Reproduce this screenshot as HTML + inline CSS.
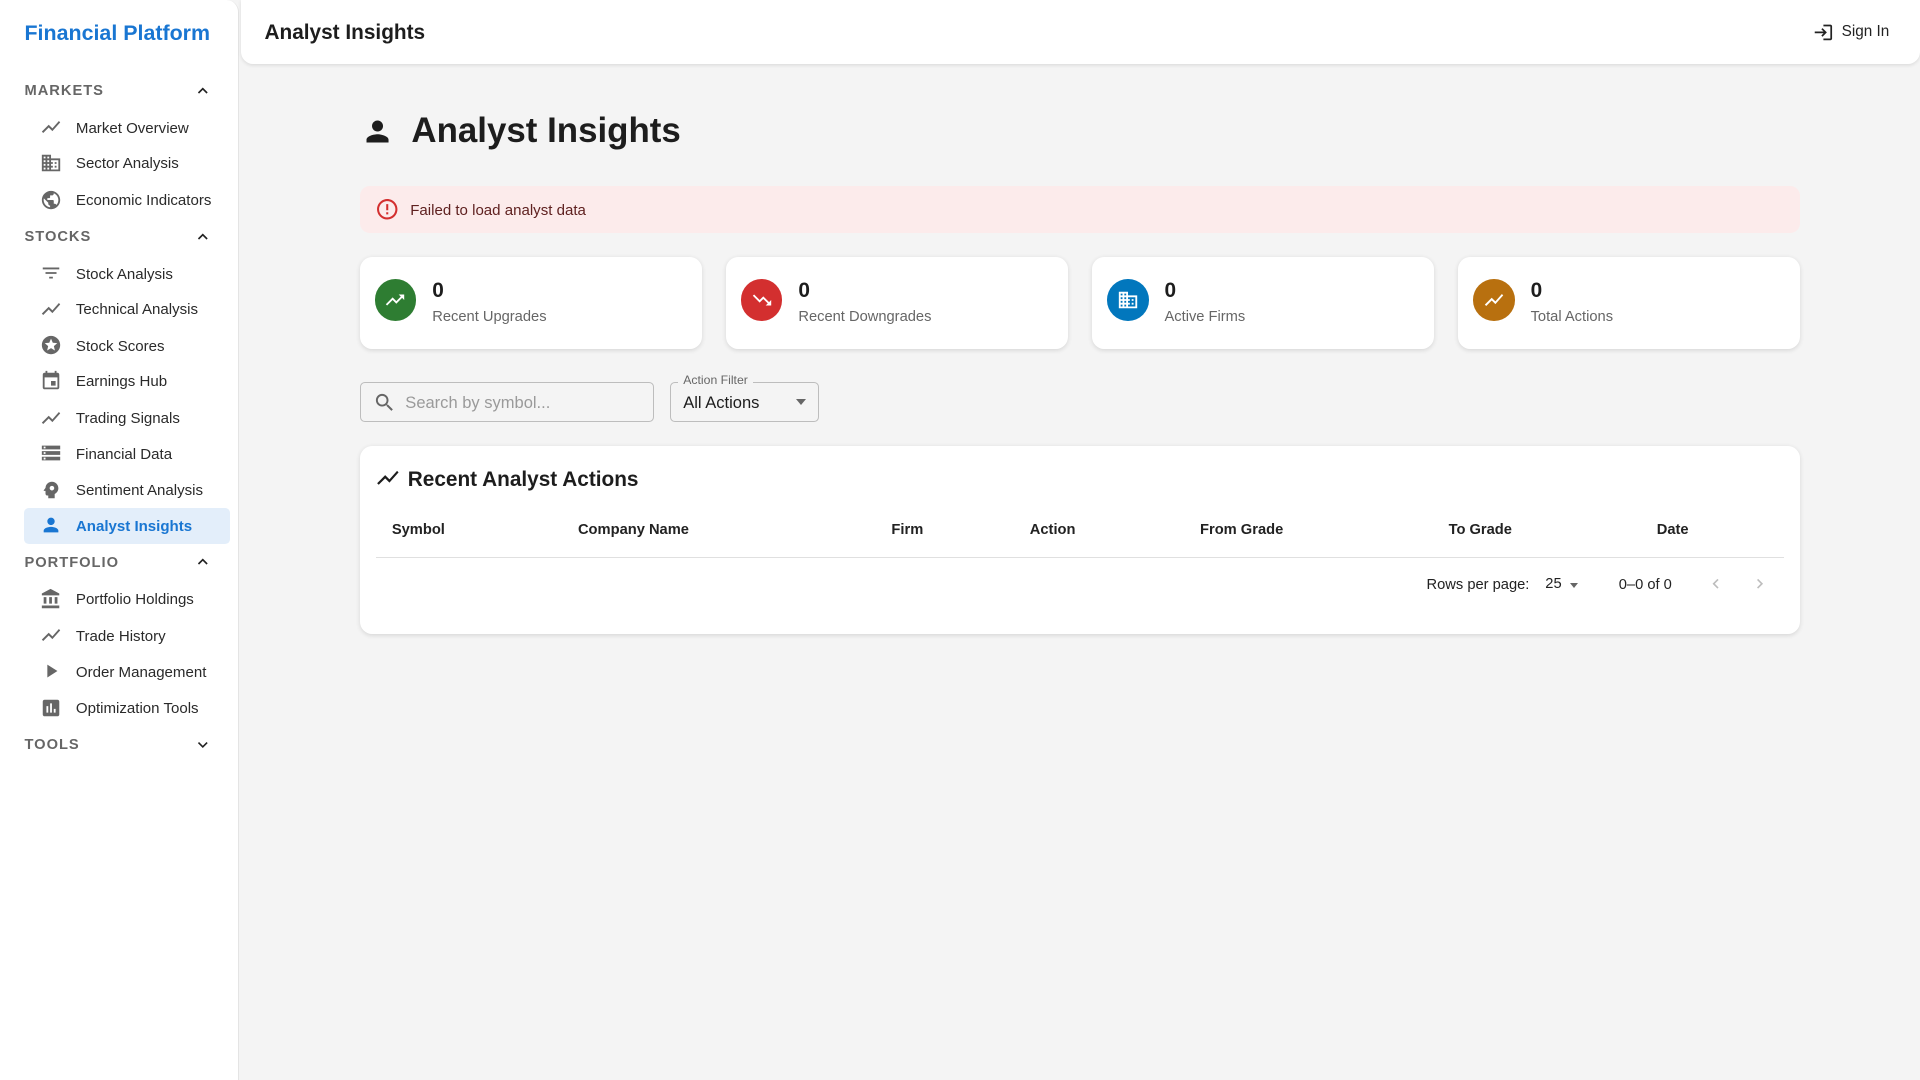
<!DOCTYPE html>
<html><head><meta charset="utf-8"><style>
*{box-sizing:border-box;margin:0;padding:0}
html,body{width:1920px;height:1080px;overflow:hidden;background:#f4f4f4;font-family:"Liberation Sans",Arial,sans-serif;color:#1d1d1d}
#w{position:absolute;left:0;top:0;width:1568px;height:882px;zoom:1.2244898}
.a{position:absolute;white-space:nowrap}
svg{display:block}
#side{position:absolute;left:0;top:0;width:195px;height:882px;background:#fff;border-right:1px solid #e4e4e4;border-radius:0 10px 0 0}
.sec{position:absolute;left:20px;font-size:12px;letter-spacing:.8px;color:#666;font-weight:600}
.chev{position:absolute;left:158px}
.it{position:absolute;left:20px;width:168px;height:29px;border-radius:4px}
.it svg{position:absolute;left:13px;top:5px}
.it span{position:absolute;left:42px;top:8px;font-size:12.3px;color:#2a2a2a}
.it.sel{background:#e3eefa}
.it.sel span{color:#1976d2;font-weight:bold}
.card{position:absolute;top:210px;width:279px;height:75px;background:#fff;border-radius:10px;box-shadow:0 1px 4px rgba(0,0,0,.12)}
.av{position:absolute;left:12px;top:18px;width:34px;height:34px;border-radius:50%}
.av svg{position:absolute;left:8px;top:8px}
.num{position:absolute;left:59px;top:18px;font-size:17px;font-weight:bold;color:#1d1d1d}
.lab{position:absolute;left:59px;top:42px;font-size:12px;color:#666}
.th{position:absolute;top:426px;font-size:12px;font-weight:600;color:#222}
</style></head><body><div id="w">
<div id="side">
<div class="a" style="left:20px;top:17px;font-size:17.5px;font-weight:bold;color:#1976d2">Financial Platform</div>
<div class="sec" style="top:68px">MARKETS</div>
<svg class="chev" style="top:66px" width="16" height="16" viewBox="0 0 24 24"><path d="M12 8l-6 6 1.41 1.41L12 10.83l4.59 4.58L18 14z" fill="#222"/></svg>
<div class="it" style="top:90px"><svg width="18" height="18" viewBox="0 0 24 24"><path d="M3.5 18.49l6-6.01 4 4L22 6.92l-1.41-1.41-7.09 7.97-4-4L2 16.99z" fill="#666"/></svg><span>Market Overview</span></div>
<div class="it" style="top:119px"><svg width="18" height="18" viewBox="0 0 24 24"><path d="M12 7V3H2v18h20V7H12zM6 19H4v-2h2v2zm0-4H4v-2h2v2zm0-4H4V9h2v2zm0-4H4V5h2v2zm4 12H8v-2h2v2zm0-4H8v-2h2v2zm0-4H8V9h2v2zm0-4H8V5h2v2zm10 12h-8v-2h2v-2h-2v-2h2v-2h-2V9h8v10zm-2-8h-2v2h2v-2zm0 4h-2v2h2v-2z" fill="#666"/></svg><span>Sector Analysis</span></div>
<div class="it" style="top:149px"><svg width="18" height="18" viewBox="0 0 24 24"><path d="M12 2C6.48 2 2 6.48 2 12s4.48 10 10 10 10-4.48 10-10S17.52 2 12 2zm-1 17.930c-3.95-.49-7-3.85-7-7.930 0-.62.08-1.21.21-1.79L9 15v1c0 1.1.9 2 2 2v1.93zm6.9-2.54c-.26-.81-1-1.39-1.9-1.39h-1v-3c0-.55-.45-1-1-1H8v-2h2c.55 0 1-.45 1-1V7h2c1.1 0 2-.9 2-2v-.41c2.93 1.19 5 4.06 5 7.41 0 2.080-.8 3.97-2.1 5.39z" fill="#666"/></svg><span>Economic Indicators</span></div>
<div class="sec" style="top:187px">STOCKS</div>
<svg class="chev" style="top:185px" width="16" height="16" viewBox="0 0 24 24"><path d="M12 8l-6 6 1.41 1.41L12 10.83l4.59 4.58L18 14z" fill="#222"/></svg>
<div class="it" style="top:209px"><svg width="18" height="18" viewBox="0 0 24 24"><path d="M10 18h4v-2h-4v2zM3 6v2h18V6H3zm3 7h12v-2H6v2z" fill="#666"/></svg><span>Stock Analysis</span></div>
<div class="it" style="top:238px"><svg width="18" height="18" viewBox="0 0 24 24"><path d="M3.5 18.49l6-6.01 4 4L22 6.92l-1.41-1.41-7.09 7.97-4-4L2 16.99z" fill="#666"/></svg><span>Technical Analysis</span></div>
<div class="it" style="top:268px"><svg width="18" height="18" viewBox="0 0 24 24"><path d="M11.99 2C6.47 2 2 6.48 2 12s4.47 10 9.99 10C17.52 22 22 17.52 22 12S17.52 2 11.99 2zm4.24 16L12 15.45 7.77 18l1.12-4.81-3.73-3.23 4.92-.42L12 5l1.92 4.53 4.92.42-3.73 3.23L16.23 18z" fill="#666"/></svg><span>Stock Scores</span></div>
<div class="it" style="top:297px"><svg width="18" height="18" viewBox="0 0 24 24"><path d="M17 12h-5v5h5v-5zM16 1v2H8V1H6v2H5c-1.11 0-1.99.9-1.99 2L3 19c0 1.1.89 2 2 2h14c1.1 0 2-.9 2-2V5c0-1.1-.9-2-2-2h-1V1h-2zm3 18H5V8h14v11z" fill="#666"/></svg><span>Earnings Hub</span></div>
<div class="it" style="top:327px"><svg width="18" height="18" viewBox="0 0 24 24"><path d="M3.5 18.49l6-6.01 4 4L22 6.92l-1.41-1.41-7.09 7.97-4-4L2 16.99z" fill="#666"/></svg><span>Trading Signals</span></div>
<div class="it" style="top:356px"><svg width="18" height="18" viewBox="0 0 24 24"><path d="M2 20h20v-4H2v4zm2-3h2v2H4v-2zM2 4v4h20V4H2zm4 3H4V5h2v2zm-4 7h20v-4H2v4zm2-3h2v2H4v-2z" fill="#666"/></svg><span>Financial Data</span></div>
<div class="it" style="top:386px"><svg width="18" height="18" viewBox="0 0 24 24"><path d="M13 3C9.2 3 6.2 5.9 6 9.6L4.1 12.2c-.2.3 0 .8.4.8H6v3c0 1.1.9 2 2 2h1v3h7v-4.7c2.4-1.1 4-3.5 4-6.3 0-3.9-3.1-7-7-7zm0 9.5a2.5 2.5 0 110-5 2.5 2.5 0 010 5z" fill="#666"/></svg><span>Sentiment Analysis</span></div>
<div class="it sel" style="top:415px"><svg width="18" height="18" viewBox="0 0 24 24"><path d="M12 12c2.21 0 4-1.79 4-4s-1.79-4-4-4-4 1.790-4 4 1.79 4 4 4zm0 2c-2.67 0-8 1.34-8 4v2h16v-2c0-2.66-5.33-4-8-4z" fill="#1976d2"/></svg><span>Analyst Insights</span></div>
<div class="sec" style="top:453px">PORTFOLIO</div>
<svg class="chev" style="top:451px" width="16" height="16" viewBox="0 0 24 24"><path d="M12 8l-6 6 1.41 1.41L12 10.83l4.59 4.58L18 14z" fill="#222"/></svg>
<div class="it" style="top:475px"><svg width="18" height="18" viewBox="0 0 24 24"><path d="M4 10v7h3v-7H4zm6 0v7h3v-7h-3zM2 22h19v-3H2v3zm14-12v7h3v-7h-3zm-4.5-9L2 6v2h19V6l-9.5-5z" fill="#666"/></svg><span>Portfolio Holdings</span></div>
<div class="it" style="top:505px"><svg width="18" height="18" viewBox="0 0 24 24"><path d="M3.5 18.49l6-6.01 4 4L22 6.92l-1.41-1.41-7.09 7.97-4-4L2 16.99z" fill="#666"/></svg><span>Trade History</span></div>
<div class="it" style="top:534px"><svg width="18" height="18" viewBox="0 0 24 24"><path d="M8 5v14l11-7z" fill="#666"/></svg><span>Order Management</span></div>
<div class="it" style="top:564px"><svg width="18" height="18" viewBox="0 0 24 24"><path d="M19 3H5c-1.1 0-2 .9-2 2v14c0 1.1.9 2 2 2h14c1.1 0 2-.9 2-2V5c0-1.1-.9-2-2-2zM9 17H7v-7h2v7zm4 0h-2V7h2v10zm4 0h-2v-4h2v4z" fill="#666"/></svg><span>Optimization Tools</span></div>
<div class="sec" style="top:602px">TOOLS</div>
<svg class="chev" style="top:600px" width="16" height="16" viewBox="0 0 24 24"><path d="M16.59 8.59L12 13.17 7.41 8.59 6 10l6 6 6-6z" fill="#222"/></svg>
</div>

<div class="a" style="left:197px;top:0;width:1371px;height:52px;background:#fff;border-radius:0 0 10px 10px;box-shadow:0 1px 3px rgba(0,0,0,.1)"></div>
<div class="a" style="left:216px;top:17px;font-size:17px;font-weight:600;color:#1d1d1d">Analyst Insights</div>
<svg class="a" style="left:1481px;top:18px" width="17" height="17" viewBox="0 0 24 24"><path d="M11 7L9.6 8.4l2.6 2.6H2v2h10.2l-2.6 2.6L11 17l5-5-5-5zm9 12h-8v2h8c1.1 0 2-.9 2-2V5c0-1.1-.9-2-2-2h-8v2h8v14z" fill="#222"/></svg>
<div class="a" style="left:1504px;top:19px;font-size:12.5px;color:#222">Sign In</div>

<svg class="a" style="left:295px;top:94px" width="27" height="27" viewBox="0 0 24 24"><path d="M12 12c2.21 0 4-1.79 4-4s-1.79-4-4-4-4 1.79-4 4 1.79 4 4 4zm0 2c-2.67 0-8 1.34-8 4v2h16v-2c0-2.66-5.33-4-8-4z" fill="#1d1d1d"/></svg>
<div class="a" style="left:336px;top:91px;font-size:28.5px;font-weight:600;color:#1d1d1d">Analyst Insights</div>

<div class="a" style="left:294px;top:152px;width:1176px;height:38px;background:#fcebeb;border-radius:8px"></div>
<svg class="a" style="left:306px;top:161px" width="20" height="20" viewBox="0 0 24 24"><path d="M11 15h2v2h-2zm0-8h2v6h-2zm.99-5C6.47 2 2 6.48 2 12s4.47 10 9.99 10C17.52 22 22 17.52 22 12S17.52 2 11.99 2zM12 20c-4.42 0-8-3.58-8-8s3.58-8 8-8 8 3.58 8 8-3.58 8-8 8z" fill="#d32f2f"/></svg>
<div class="a" style="left:335px;top:165px;font-size:12.3px;color:#5f2120">Failed to load analyst data</div>

<div class="card" style="left:294px"><div class="av" style="background:#2e7d32"><svg width="18" height="18" viewBox="0 0 24 24"><path d="M16 6l2.29 2.29-4.88 4.880-4-4L2 16.59 3.41 18l6-6 4 4 6.3-6.29L22 12V6z" fill="#fff"/></svg></div><div class="num">0</div><div class="lab">Recent Upgrades</div></div>
<div class="card" style="left:593px"><div class="av" style="background:#d32f2f"><svg width="18" height="18" viewBox="0 0 24 24"><path d="M16 18l2.29-2.29-4.88-4.88-4 4L2 7.41 3.41 6l6 6 4-4 6.3 6.29L22 12v6z" fill="#fff"/></svg></div><div class="num">0</div><div class="lab">Recent Downgrades</div></div>
<div class="card" style="left:892px"><div class="av" style="background:#0277bd"><svg width="18" height="18" viewBox="0 0 24 24"><path d="M12 7V3H2v18h20V7H12zM6 19H4v-2h2v2zm0-4H4v-2h2v2zm0-4H4V9h2v2zm0-4H4V5h2v2zm4 12H8v-2h2v2zm0-4H8v-2h2v2zm0-4H8V9h2v2zm0-4H8V5h2v2zm10 12h-8v-2h2v-2h-2v-2h2v-2h-2V9h8v10zm-2-8h-2v2h2v-2zm0 4h-2v2h2v-2z" fill="#fff"/></svg></div><div class="num">0</div><div class="lab">Active Firms</div></div>
<div class="card" style="left:1191px"><div class="av" style="background:#b8700f"><svg width="18" height="18" viewBox="0 0 24 24"><path d="M3.5 18.49l6-6.01 4 4L22 6.92l-1.41-1.41-7.09 7.97-4-4L2 16.99z" fill="#fff"/></svg></div><div class="num">0</div><div class="lab">Total Actions</div></div>

<div class="a" style="left:294px;top:312px;width:240px;height:33px;border:1px solid #bdbdbd;border-radius:4px"></div>
<svg class="a" style="left:305px;top:319px" width="19" height="19" viewBox="0 0 24 24"><path d="M15.5 14h-.79l-.28-.27C15.41 12.59 16 11.11 16 9.5 16 5.91 13.09 3 9.5 3S3 5.91 3 9.5 5.91 16 9.5 16c1.61 0 3.09-.59 4.23-1.57l.27.28v.79l5 4.99L20.49 19l-4.99-5zm-6 0C7.01 14 5 11.99 5 9.5S7.01 5 9.5 5 14 7.01 14 9.5 11.99 14 9.5 14z" fill="#666"/></svg>
<div class="a" style="left:331px;top:321px;font-size:13.5px;color:#9a9a9a">Search by symbol...</div>
<div class="a" style="left:547px;top:312px;width:122px;height:33px;border:1px solid #bdbdbd;border-radius:4px"></div>
<div class="a" style="left:554px;top:305px;padding:0 4px;background:#f4f4f4;font-size:10px;color:#666">Action Filter</div>
<div class="a" style="left:558px;top:321px;font-size:13.5px;color:#1d1d1d">All Actions</div>
<div class="a" style="left:650px;top:326px;width:0;height:0;border-left:4.5px solid transparent;border-right:4.5px solid transparent;border-top:5px solid #666"></div>

<div class="a" style="left:294px;top:364px;width:1176px;height:154px;background:#fff;border-radius:10px;box-shadow:0 1px 4px rgba(0,0,0,.12)"></div>
<svg class="a" style="left:306px;top:380px" width="21" height="21" viewBox="0 0 24 24"><path d="M3.5 18.49l6-6.01 4 4L22 6.92l-1.41-1.41-7.09 7.97-4-4L2 16.99z" fill="#1d1d1d"/></svg>
<div class="a" style="left:333px;top:382px;font-size:17px;font-weight:600;color:#1d1d1d">Recent Analyst Actions</div>
<div class="th" style="left:320px">Symbol</div>
<div class="th" style="left:472px">Company Name</div>
<div class="th" style="left:728px">Firm</div>
<div class="th" style="left:841px">Action</div>
<div class="th" style="left:980px">From Grade</div>
<div class="th" style="left:1183px">To Grade</div>
<div class="th" style="left:1353px">Date</div>
<div class="a" style="left:307px;top:455px;width:1150px;height:1px;background:#e0e0e0"></div>
<div class="a" style="left:1165px;top:471px;font-size:12px;color:#222">Rows per page:</div>
<div class="a" style="left:1262px;top:470px;font-size:12px;color:#222">25</div>
<div class="a" style="left:1282px;top:476px;width:0;height:0;border-left:4px solid transparent;border-right:4px solid transparent;border-top:4.5px solid #666"></div>
<div class="a" style="left:1322px;top:471px;font-size:12px;color:#222">0–0 of 0</div>
<svg class="a" style="left:1393px;top:469px" width="16" height="16" viewBox="0 0 24 24"><path d="M15.41 7.41L14 6l-6 6 6 6 1.41-1.41L10.830 12z" fill="#bdbdbd"/></svg>
<svg class="a" style="left:1429px;top:469px" width="16" height="16" viewBox="0 0 24 24"><path d="M10 6L8.59 7.41 13.17 12l-4.58 4.59L10 18l6-6z" fill="#bdbdbd"/></svg>
</div></body></html>
